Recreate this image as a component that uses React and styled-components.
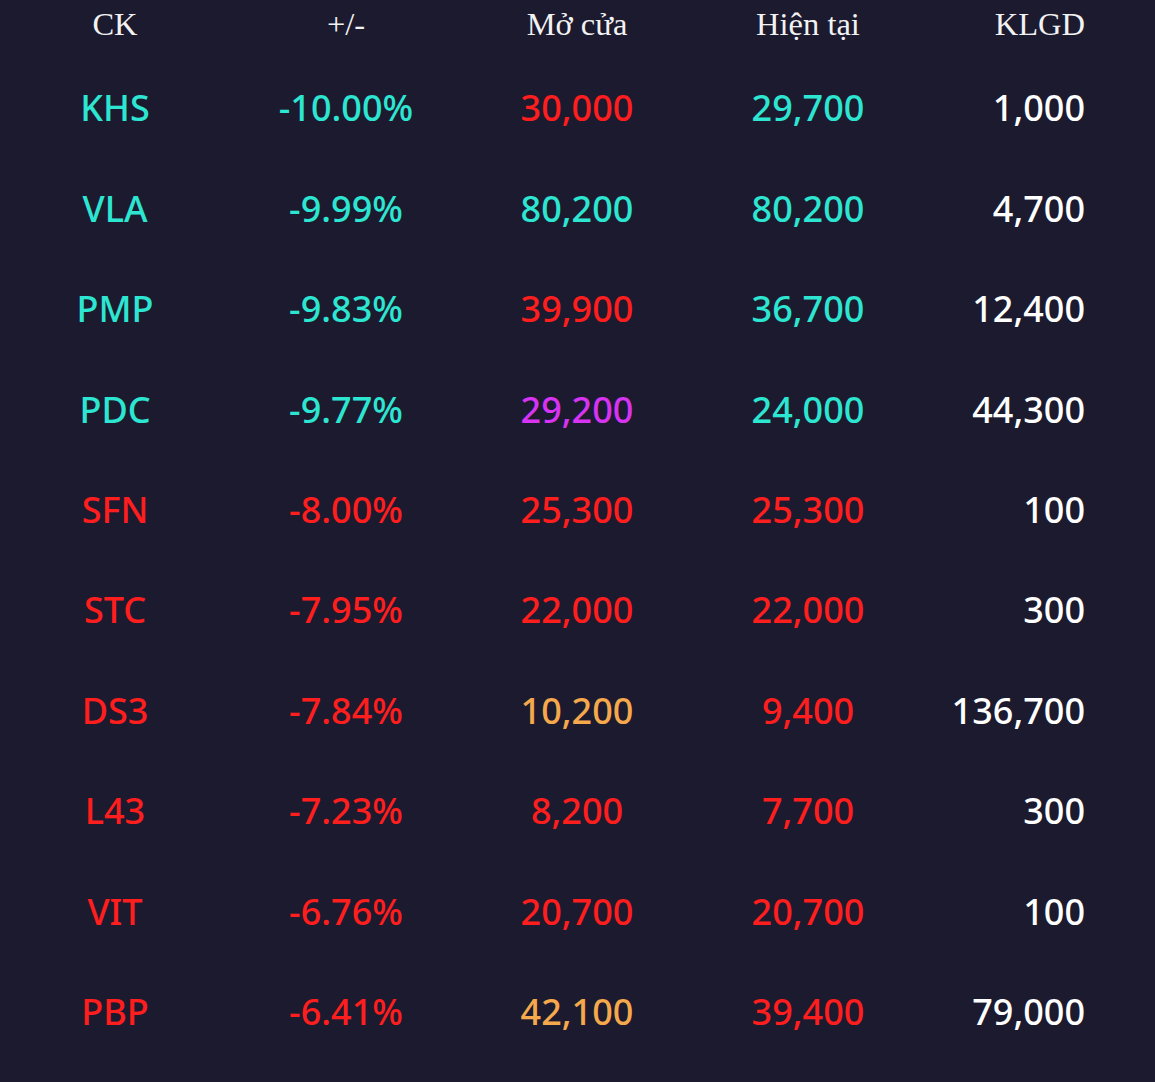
import React from "react";
import styled, { createGlobalStyle } from "styled-components";

const Global = createGlobalStyle`
  html, body { margin: 0; padding: 0; background: #1c1a2e; }
  body { width: 1155px; min-height: 1082px; overflow: hidden; }
`;

const COLORS = {
  down: "#2de6d2",
  up: "#ff1e1e",
  ceil: "#d733f2",
  ref: "#f5a94c",
  plain: "#ffffff",
};

const Table = styled.div`
  width: 1155px;
  height: 1082px;
  background: #1c1a2e;
  display: flex;
  flex-direction: column;
`;

const Grid = styled.div`
  display: grid;
  grid-template-columns: 231px 231px 231px 231px 231px;
  align-items: center;
`;

const HeaderRow = styled(Grid)`
  height: 48px;
  margin-bottom: 10px;
`;

const HeadCell = styled.div`
  font-family: "Liberation Serif", "Times New Roman", serif;
  font-size: 32.5px;
  color: #f2f2f2;
  text-align: ${(p) => (p.$right ? "right" : "center")};
  padding-right: ${(p) => (p.$right ? "70px" : "0")};
  margin-left: ${(p) => (p.$right ? "0" : "-1px")};
  line-height: 48px;
`;

const Row = styled(Grid)`
  height: 100.45px;
`;

const Cell = styled.div`
  font-family: "Noto Sans", "Open Sans", sans-serif;
  font-size: 36px;
  font-weight: 500;
  color: ${(p) => COLORS[p.$tone]};
  text-align: ${(p) => (p.$right ? "right" : "center")};
  padding-right: ${(p) => (p.$right ? "70px" : "0")};
  margin-left: ${(p) => (p.$right ? "0" : "-1px")};
  line-height: 1;
`;

const rows = [
  ["KHS", "down", "-10.00%", "down", "30,000", "up", "29,700", "down", "1,000"],
  ["VLA", "down", "-9.99%", "down", "80,200", "down", "80,200", "down", "4,700"],
  ["PMP", "down", "-9.83%", "down", "39,900", "up", "36,700", "down", "12,400"],
  ["PDC", "down", "-9.77%", "down", "29,200", "ceil", "24,000", "down", "44,300"],
  ["SFN", "up", "-8.00%", "up", "25,300", "up", "25,300", "up", "100"],
  ["STC", "up", "-7.95%", "up", "22,000", "up", "22,000", "up", "300"],
  ["DS3", "up", "-7.84%", "up", "10,200", "ref", "9,400", "up", "136,700"],
  ["L43", "up", "-7.23%", "up", "8,200", "up", "7,700", "up", "300"],
  ["VIT", "up", "-6.76%", "up", "20,700", "up", "20,700", "up", "100"],
  ["PBP", "up", "-6.41%", "up", "42,100", "ref", "39,400", "up", "79,000"],
];

export default function App() {
  return (
    <>
      <Global />
      <Table>
        <HeaderRow>
          <HeadCell>CK</HeadCell>
          <HeadCell>+/-</HeadCell>
          <HeadCell>Mở cửa</HeadCell>
          <HeadCell>Hiện tại</HeadCell>
          <HeadCell $right>KLGD</HeadCell>
        </HeaderRow>
        {rows.map((r) => (
          <Row key={r[0]}>
            <Cell $tone={r[1]}>{r[0]}</Cell>
            <Cell $tone={r[3]}>{r[2]}</Cell>
            <Cell $tone={r[5]}>{r[4]}</Cell>
            <Cell $tone={r[7]}>{r[6]}</Cell>
            <Cell $tone="plain" $right>{r[8]}</Cell>
          </Row>
        ))}
      </Table>
    </>
  );
}
